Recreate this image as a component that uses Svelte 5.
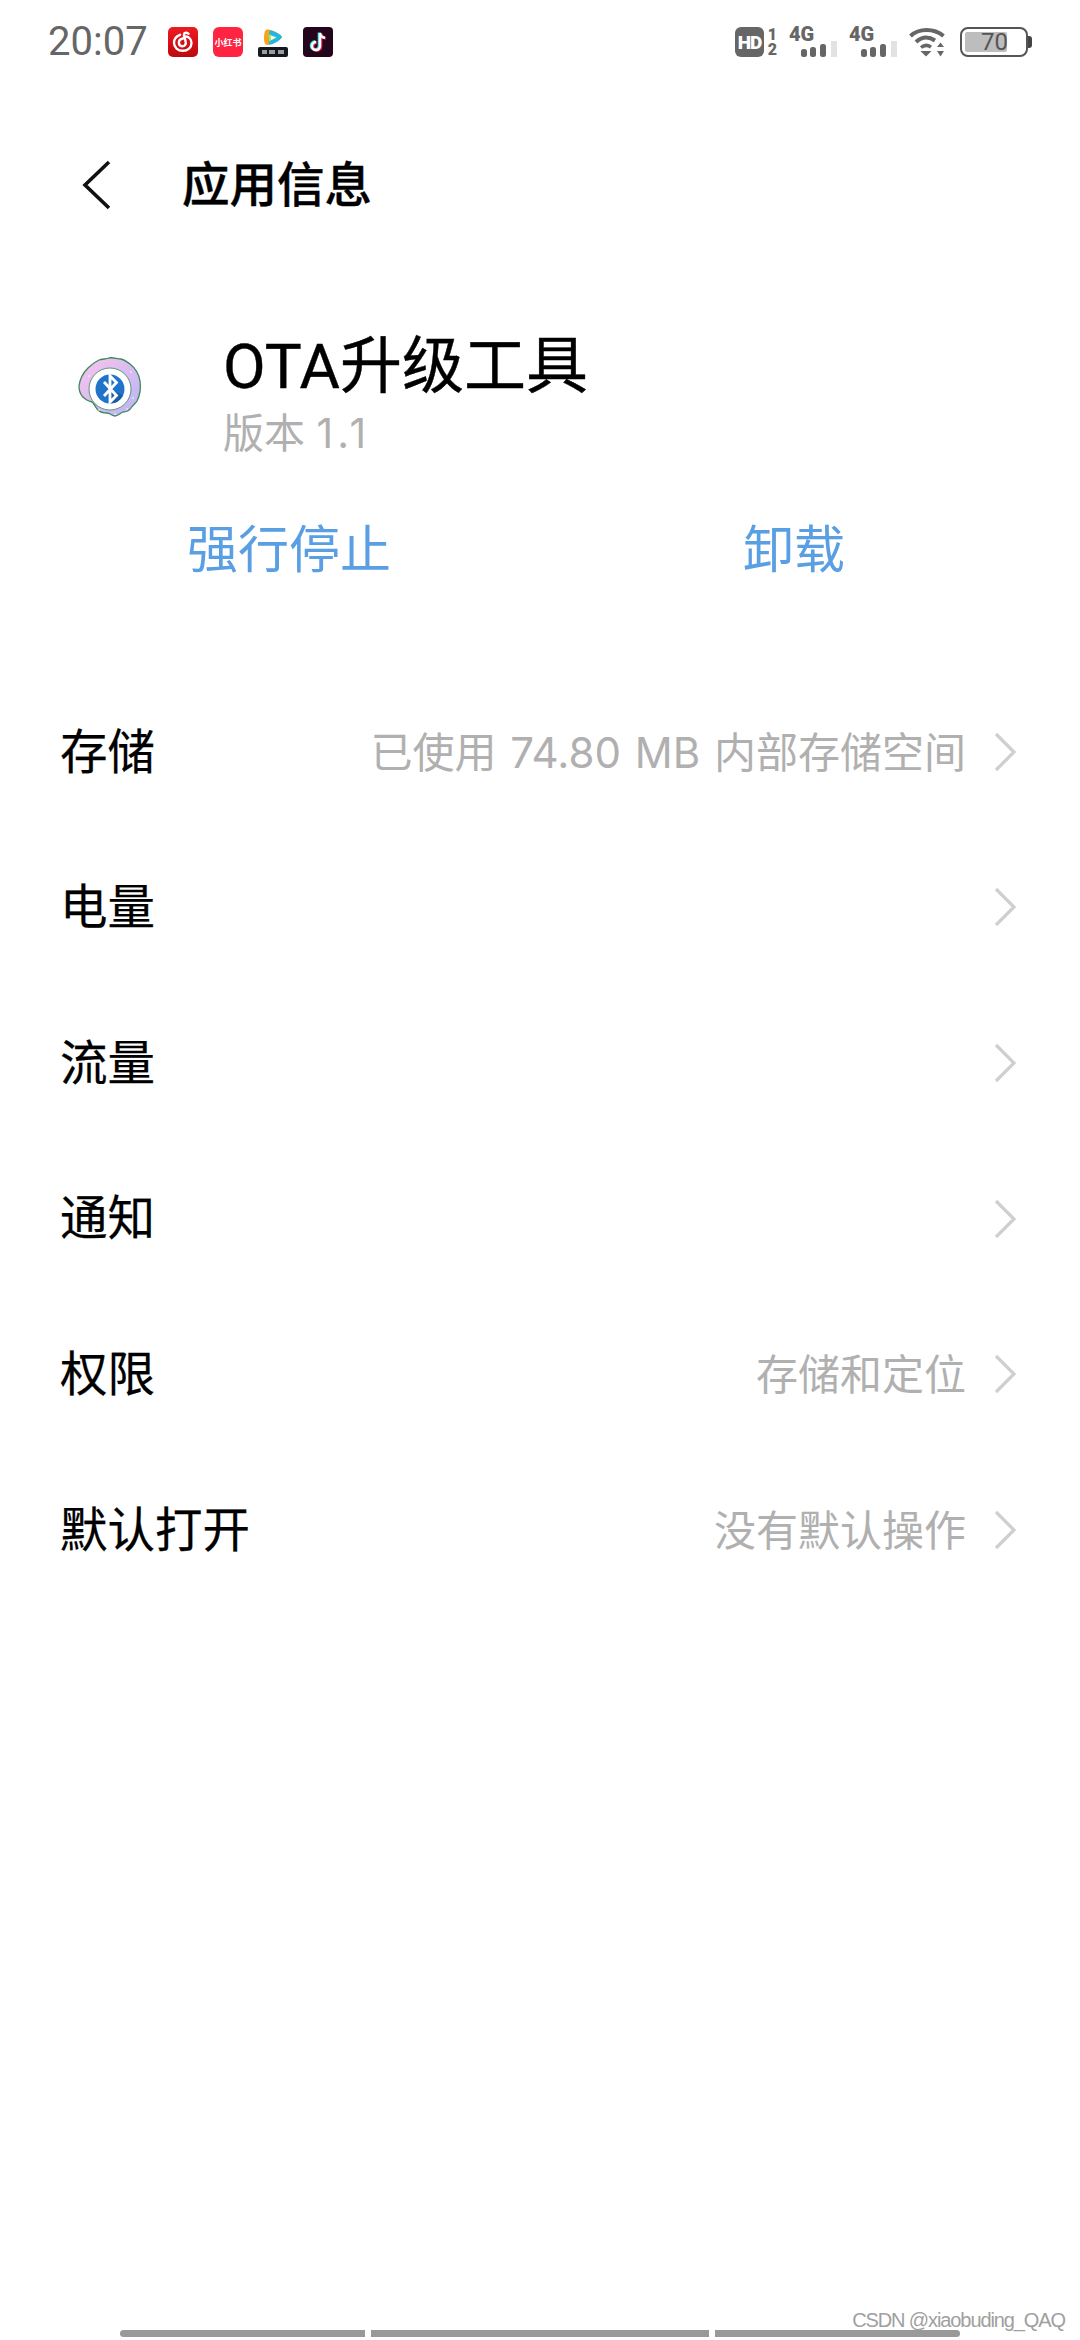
<script lang="ts">
const rows = [
	{ label: '存储', value: '已使用 74.80 MB 内部存储空间' },
	{ label: '电量', value: '' },
	{ label: '流量', value: '' },
	{ label: '通知', value: '' },
	{ label: '权限', value: '存储和定位' },
	{ label: '默认打开', value: '没有默认操作' }
];
const navSegments = [245, 338, 245];
const sparkles = [[17, 50], [24, 56], [52, 55], [58, 44], [14, 22], [56, 18], [40, 60]];
</script>

<div class="page">
	<header class="status">
		<span class="time">20:07</span>
		<div class="notifs">
			<svg class="notif" viewBox="0 0 30 30" aria-hidden="true">
				<defs>
					<linearGradient id="netease" x1="0" y1="0" x2="0" y2="1">
						<stop offset="0" stop-color="#ee1a20" />
						<stop offset="1" stop-color="#bd080e" />
					</linearGradient>
				</defs>
				<rect width="30" height="30" rx="5" fill="url(#netease)" />
				<path d="M20.500 6.800c-1.500-1.800-4.500-1.300-4.600 1l1.700 6.700c.7 2.600-.8 4.800-3 4.800-2.300 0-3.700-1.600-3.700-3.600 0-2.200 1.600-3.800 3.900-4.200M12 7.800c-3.600 1.300-6 4.300-6 8 0 4.600 3.900 8 8.800 8 4.900 0 8.700-3.300 8.700-7.800 0-3.400-2.300-6-5.400-6.500" fill="none" stroke="#fff" stroke-width="2.400" stroke-linecap="round" />
			</svg>
			<div class="notif xhs">小红书</div>
			<svg class="notif" viewBox="0 0 30 30" aria-hidden="true">
				<path d="M9 2.500c3-.3 10 2.400 14 6 1 1 1 2 0 3-3.500 3.500-9 6-13.500 6.500-1.500 0-2.500-.8-3-2.500-.7-3-.7-6 0-9.500.2-1.500 1-3.300 2.500-3.500z" fill="#f7a21b" />
				<path d="M12 3.300c3.500.8 8 3 11 5.200 1 1 1 2 0 3-3 3-7.500 5.500-11.500 6.300-1.500-3.500-1-11 .5-14.500z" fill="#1fb6e8" />
				<path d="M10.500 7.200 19 10.300l-8 4.300z" fill="#b9e34a" />
				<path d="M13 8.800 18 10.400l-5 2.600z" fill="#fff" />
				<rect y="20" width="30" height="10" rx="2" fill="#15181c" />
				<path d="M4 23h5v4H4zM11 23h6v4h-6zM20 23h6v4h-6z" fill="#c9c9c9" opacity=".75" />
			</svg>
			<svg class="notif" viewBox="0 0 30 30" aria-hidden="true">
				<rect width="30" height="30" rx="4" fill="#24061c" />
				<path d="M17 6v13a4 4 0 1 1-4-4M17 6c.4 2.700 2.200 4.500 5 4.800" fill="none" stroke="#2fe3e8" stroke-width="3" transform="translate(-.8 -.4)" />
				<path d="M17 6v13a4 4 0 1 1-4-4M17 6c.4 2.700 2.200 4.500 5 4.800" fill="none" stroke="#f5254f" stroke-width="3" transform="translate(.8 .4)" />
				<path d="M17 6v13a4 4 0 1 1-4-4M17 6c.4 2.700 2.200 4.500 5 4.800" fill="none" stroke="#fff" stroke-width="2.400" />
			</svg>
		</div>
		<div class="indicators">
			<span class="hd">HD</span>
			<span class="sims"><b>1</b><b>2</b></span>
			{#each [0, 1] as sim}
				<div class="cell">
					<span class="net">4G</span>
					<svg class="bars" viewBox="0 0 36 16" aria-hidden="true">
						<rect x="0" y="8" width="6" height="8" rx="2.500" fill="#666" />
						<rect x="9" y="6" width="6" height="10" rx="2.500" fill="#666" />
						<rect x="19" y="3" width="6" height="13" rx="2.500" fill="#666" />
						<rect x="30" y="0" width="6" height="16" fill="#e2e2e2" />
					</svg>
				</div>
			{/each}
			<svg class="wifi" viewBox="0 0 36 30" aria-hidden="true">
				<path d="M1.500 9C10 1 25 1 34.500 9" fill="none" stroke="#666" stroke-width="4" />
				<path d="M7 15C13 9.500 20 9.500 26 13.500" fill="none" stroke="#666" stroke-width="4" />
				<path d="M12 20.500c3-2.500 7-2.500 10-.3" fill="none" stroke="#666" stroke-width="3.500" />
				<path d="M11.500 24h11l-5.500 5.500zM28 20l3.500-4.500L35 20zM28 24h7l-3.500 5.500z" fill="#666" />
			</svg>
			<div class="battery">
				<span class="fill"></span>
				<span class="level">70</span>
			</div>
		</div>
	</header>

	<nav class="titlebar">
		<svg class="back" viewBox="0 0 30 50" aria-hidden="true">
			<path d="M27 2 3 25l24 23" fill="none" stroke="#111" stroke-width="3.600" />
		</svg>
		<h1>应用信息</h1>
	</nav>

	<section class="app">
		<svg class="app-icon" viewBox="0 0 70 70" aria-hidden="true">
			<defs>
				<linearGradient id="donut" x1="0" y1="0" x2="1" y2="1">
					<stop offset="0" stop-color="#fbc4ec" />
					<stop offset="1" stop-color="#b9b4f6" />
				</linearGradient>
			</defs>
			<path d="M34 4c4-1 8 1 12 1 4 1 6 3 9 5 5 4 9 10 10 17 1 7 0 14-3 20-2 3-4 4-6 7-2 3-5 4-8 4-3 1-5 4-8 4s-5-3-8-3c-3 0-6 0-9-3-2-2-3-5-6-8C6 45 4 38 4 32c1-8 4-13 9-18 3-3 7-6 11-8 3-1 7-1 10-2z" fill="url(#donut)" stroke="#3c8a5a" stroke-width="1.300" />
			<circle cx="35" cy="35" r="21" fill="#fff" stroke="#4f8f70" stroke-width=".9" />
			<circle cx="35" cy="35" r="14.500" fill="#1f73c9" />
			<path d="M35 35 48 41.500a14.500 14.500 0 0 1-13 8z" fill="#1a5ea8" />
			<path d="m29 28 12.500 13.500L35 48V22l6.500 6.500L29 42" fill="none" stroke="#fff" stroke-width="2.800" />
			{#each sparkles as [x, y]}
				<circle cx={x} cy={y} r=".8" fill="#fff" />
			{/each}
		</svg>
		<div class="app-text">
			<div class="app-name">OTA升级工具</div>
			<div class="app-version">版本 <span class="version-number">1.1</span></div>
		</div>
	</section>

	<div class="actions">
		<button type="button" class="action">强行停止</button>
		<button type="button" class="action remove">卸载</button>
	</div>

	<ul class="rows">
		{#each rows as row}
			<li class="row">
				<span class="label">{row.label}</span>
				{#if row.value}
					<span class="value">{row.value}</span>
				{/if}
				<svg class="chevron" viewBox="0 0 22 40" aria-hidden="true">
					<path d="M2 2l18 18L2 38" fill="none" stroke="#cfcfcf" stroke-width="3.200" />
				</svg>
			</li>
		{/each}
	</ul>

	<div class="navbar">
		{#each navSegments as width}
			<span class="seg" style="width: {width}px"></span>
		{/each}
	</div>

	<span class="watermark">CSDN @xiaobuding_QAQ</span>
</div>

<style>
:global(body) {
	margin: 0;
	background: #fff;
}

.page {
	position: relative;
	display: flex;
	flex-direction: column;
	width: 1080px;
	height: 2340px;
	overflow: hidden;
	font-family: Roboto, 'Noto Sans CJK SC', sans-serif;
	color: #000;
	background: #fff;
}

.status {
	display: flex;
	align-items: center;
	height: 84px;
	padding: 0 52px 0 48px;
	box-sizing: border-box;
}

.time {
	width: 120px;
	font-size: 40px;
	line-height: 1;
	color: #666;
}

.notifs {
	display: flex;
	gap: 15px;
}

.notif {
	display: block;
	width: 30px;
	height: 30px;
}

.xhs {
	display: flex;
	align-items: center;
	justify-content: center;
	font-size: 9px;
	font-weight: 700;
	color: #fff;
	background: #ff2442;
	border-radius: 6px;
}

.indicators {
	display: flex;
	align-items: center;
	margin-left: auto;
}

.hd {
	display: flex;
	align-items: center;
	justify-content: center;
	width: 29px;
	height: 30px;
	font-size: 19px;
	font-weight: 900;
	letter-spacing: -1px;
	color: #fff;
	background: #666;
	border-radius: 6px;
}

.sims {
	display: flex;
	flex-direction: column;
	justify-content: space-between;
	align-items: center;
	width: 11px;
	height: 30px;
	margin-left: 3px;
	font-size: 16px;
	line-height: 15px;
	color: #666;
}

.sims b {
	font-weight: 900;
}

.cell {
	position: relative;
	width: 48px;
	height: 30px;
	margin-left: 11px;
}

.cell + .cell {
	margin-left: 12px;
}

.net {
	display: block;
	font-size: 20px;
	font-weight: 900;
	line-height: 15px;
	color: #666;
}

.bars {
	position: absolute;
	right: 0;
	bottom: 0;
	width: 36px;
	height: 16px;
}

.wifi {
	width: 36px;
	height: 30px;
	margin-left: 12px;
}

.battery {
	position: relative;
	width: 68px;
	height: 30px;
	margin-left: 15px;
	box-sizing: border-box;
	border: 2px solid #555;
	border-radius: 8px;
}

.battery::after {
	content: '';
	position: absolute;
	top: 7px;
	left: 66px;
	width: 4px;
	height: 12px;
	background: #444;
	border-radius: 0 3px 3px 0;
}

.fill {
	position: absolute;
	top: 3px;
	left: 3px;
	width: 42px;
	height: 20px;
	background: #bdbdbd;
	border-radius: 2px;
}

.level {
	position: absolute;
	top: 0;
	left: 19px;
	font-size: 24px;
	line-height: 26px;
	color: #555;
}

.titlebar {
	display: flex;
	align-items: center;
	height: 202px;
	padding-left: 82px;
}

.back {
	flex-shrink: 0;
	width: 30px;
	height: 50px;
}

h1 {
	margin: 3px 0 0 70px;
	font-size: 47.5px;
	font-weight: 500;
	line-height: 1;
	-webkit-text-stroke: 0.4px #000;
}

.app {
	display: flex;
	align-items: center;
	height: 142px;
	margin-top: 39px;
	padding-left: 75px;
}

.app-icon {
	flex-shrink: 0;
	width: 70px;
	height: 70px;
	margin-bottom: 14px;
}

.app-text {
	margin-left: 78px;
}

.app-name {
	font-size: 62px;
	line-height: 76px;
	-webkit-text-stroke: 0.4px #000;
}

.app-version {
	margin-top: -2px;
	font-family: Inter, 'Noto Sans CJK SC', sans-serif;
	font-size: 41px;
	line-height: 60px;
	color: #b0b0b0;
}

.version-number {
	letter-spacing: 4px;
}

.actions {
	display: flex;
	height: 122px;
	margin-top: 22px;
	align-items: center;
	padding-left: 187px;
}

.action {
	padding: 0;
	font: inherit;
	font-size: 51px;
	line-height: 1;
	color: #5a9fe3;
	background: none;
	border: 0;
}

.remove {
	margin-left: 352px;
}

.rows {
	margin: 63px 0 0;
	padding: 0;
	list-style: none;
}

.row {
	display: flex;
	align-items: center;
	height: 155.6px;
	padding: 0 64px 0 60px;
}

.label {
	margin-top: 3px;
	font-size: 47.5px;
	line-height: 1;
	-webkit-text-stroke: 0.25px #000;
}

.value {
	margin-top: 2px;
	margin-left: auto;
	font-family: Inter, 'Noto Sans CJK SC', sans-serif;
	font-size: 42px;
	line-height: 1;
	word-spacing: 2px;
	color: #b0b0b0;
}

.chevron {
	flex-shrink: 0;
	width: 22px;
	height: 40px;
	margin-left: 28px;
}

.row:not(:has(.value)) .chevron {
	margin-left: auto;
}

.navbar {
	display: flex;
	gap: 6px;
	margin-top: auto;
	padding: 0 0 3px 120px;
}

.seg {
	height: 7px;
	background: #999;
}

.seg:first-child {
	border-radius: 4px 0 0 4px;
}

.seg:last-child {
	border-radius: 0 4px 4px 0;
}

.watermark {
	position: absolute;
	right: 15px;
	bottom: 8px;
	font-family: 'Liberation Sans', sans-serif;
	font-size: 20px;
	letter-spacing: -1.1px;
	color: #a0a0a0;
}
</style>
